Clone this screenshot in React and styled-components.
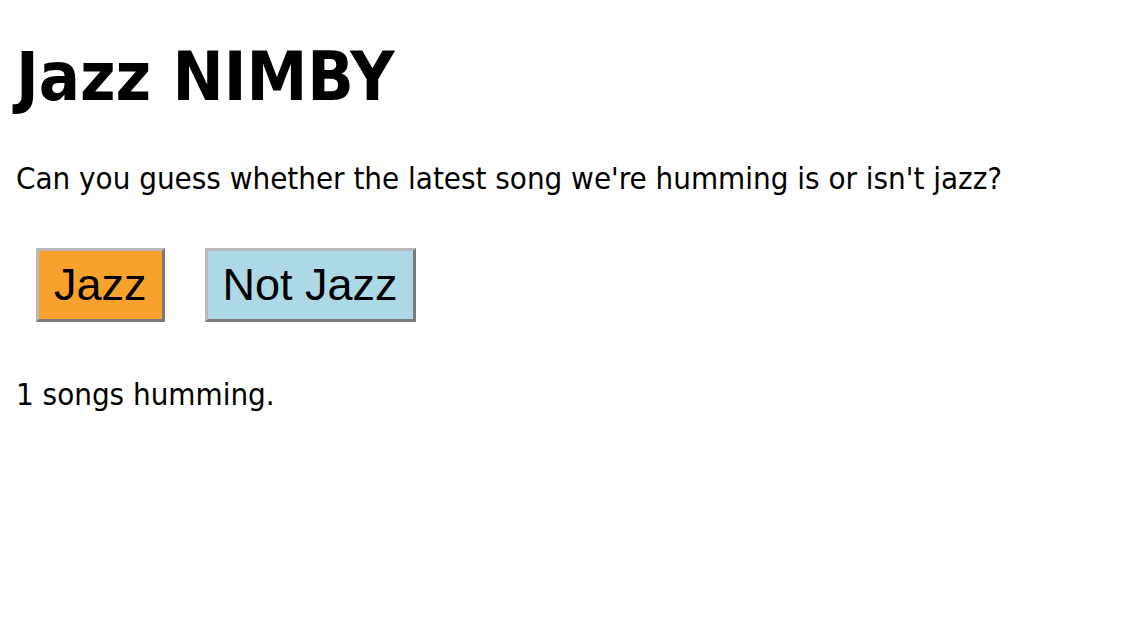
import React, { useState } from "react";
import styled, { createGlobalStyle } from "styled-components";

const Global = createGlobalStyle`
  html, body { margin: 0; padding: 0; background: #ffffff; }
  body { font-family: "DejaVu Sans Condensed", "DejaVu Sans", sans-serif; color: #000; }
`;

const Page = styled.div`
  display: flex;
  flex-direction: column;
  align-items: flex-start;
  padding: 16px;
`;

const Title = styled.h1`
  margin: 21px 0 0;
  font-family: "DejaVu Sans Condensed", "DejaVu Sans", sans-serif;
  font-weight: 700;
  font-size: 68px;
  line-height: 80px;
`;

const Text = styled.p`
  margin: ${(p) => p.$top}px 0 0;
  font-size: 31px;
  line-height: 36px;
`;

const ButtonRow = styled.div`
  display: flex;
  gap: 40px;
  margin-top: 52px;
  padding-left: 20px;
`;

const VoteButton = styled.button`
  font-family: "Liberation Sans", Arial, sans-serif;
  font-size: 45px;
  line-height: 52px;
  padding: 8px 15px;
  color: #000;
  background: ${(p) => p.$bg};
  border-style: solid;
  border-width: 3px;
  border-color: #b9b9b9 #7a7a7a #7a7a7a #b9b9b9;
  border-radius: 0;
  cursor: pointer;
`;

export default function App() {
  const [count] = useState(1);
  return (
    <>
      <Global />
      <Page>
        <Title>Jazz NIMBY</Title>
        <Text $top={43}>Can you guess whether the latest song we're humming is or isn't jazz?</Text>
        <ButtonRow>
          <VoteButton $bg="#f8a12c">Jazz</VoteButton>
          <VoteButton $bg="#add8e6">Not Jazz</VoteButton>
        </ButtonRow>
        <Text $top={54}>{count} songs humming.</Text>
      </Page>
    </>
  );
}
